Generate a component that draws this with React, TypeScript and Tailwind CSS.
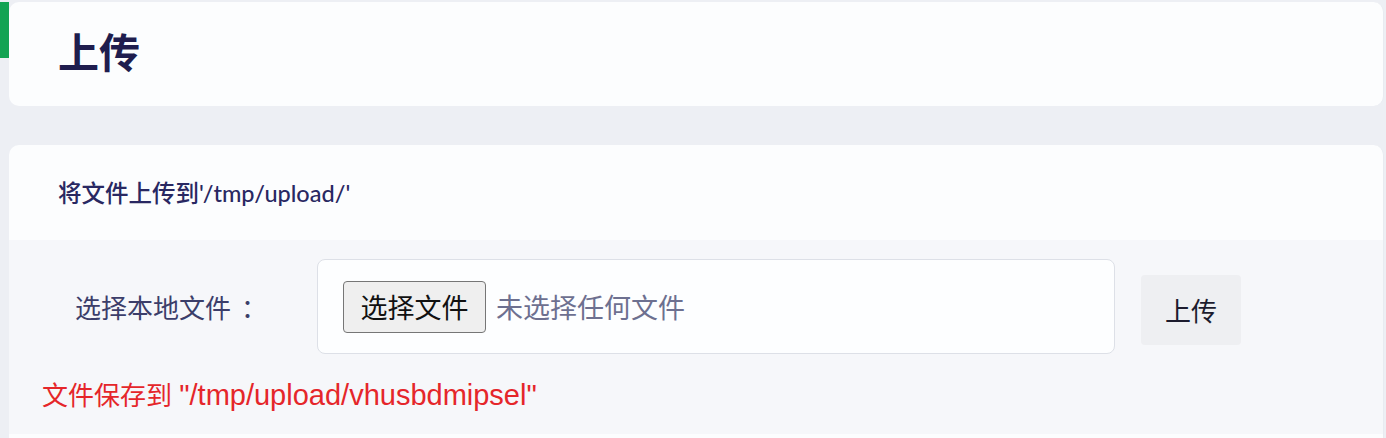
import React from "react";

const cjk = { fontFamily: '"Noto Sans CJK SC", "Noto Sans", sans-serif' };
const mixed = { fontFamily: 'Lato, "Noto Sans CJK SC", sans-serif' };
const arial = { fontFamily: '"Liberation Sans", "Noto Sans CJK SC", sans-serif' };

export default function App() {
  return (
    <div className="w-[1386px] h-[438px] overflow-hidden bg-[#edeff4] pt-[2px] pr-[2px] flex flex-col">
      <div className="flex items-start">
        <div className="w-[9px] h-[56px] bg-[#13a353]" />
        <div className="flex-1 h-[104px] bg-[#fcfdfe] rounded-[10px] flex items-center pl-[49px] pb-[8px] border-r border-[#e8ebf0]">
          <h1 className="text-[41px] font-bold text-[#1f1d4e] leading-none" style={cjk}>
            上传
          </h1>
        </div>
      </div>

      <div className="mt-[39px] ml-[9px] flex-1 flex flex-col bg-[#fcfdfe] rounded-t-[10px] border-r border-[#e8ebf0]">
        <div className="h-[95px] flex items-center pl-[49px] pt-[2px]">
          <p className="text-[23.5px] font-medium text-[#292862] leading-none" style={mixed}>
            将文件上传到'/tmp/upload/'
          </p>
        </div>
        <div className="h-[194px] bg-[#f6f7fa] flex flex-col">
          <div className="flex items-center pt-[19px]">
            <div className="w-[308px] pl-[66px] text-[26px] text-[#3c3e6a] leading-none flex" style={cjk}>
              <span>选择本地文件</span>
              <span className="ml-[10px]">：</span>
            </div>
            <div className="w-[798px] h-[95px] bg-[#fdfeff] border border-[#dde0e7] rounded-[8px] flex items-center pl-[25px]">
              <button
                className="h-[52px] w-[143px] bg-[#efefef] border border-[#767676] rounded-[4px] text-[27px] text-[#111] leading-none"
                style={cjk}
              >
                选择文件
              </button>
              <span className="ml-[10px] text-[27px] text-[#6d7090] leading-none" style={cjk}>
                未选择任何文件
              </span>
            </div>
            <button
              className="ml-[26px] mt-[6px] w-[100px] h-[70px] bg-[#eeeff2] rounded-[4px] text-[26px] text-[#1c1b2e] leading-none"
              style={cjk}
            >
              上传
            </button>
          </div>
          <div className="mt-[27px] pl-[33px] text-[26px] text-[#e5262a] leading-none" style={arial}>
            文件保存到 <span className="text-[29px]">"/tmp/upload/vhusbdmipsel"</span>
          </div>
        </div>
        <div className="flex-1 bg-[#fcfdfe]" />
      </div>
    </div>
  );
}
